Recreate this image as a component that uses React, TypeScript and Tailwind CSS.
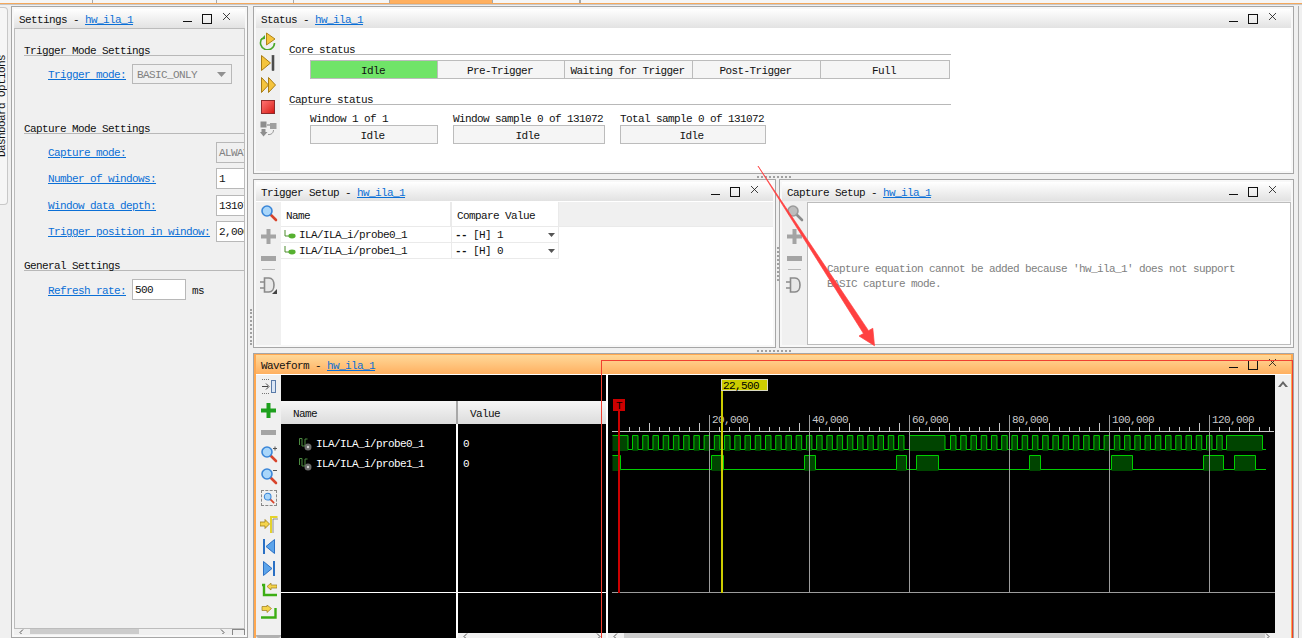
import React from 'react';

const LINK = 'text-[#0a6fd6] underline';

const WindowButtons = () => (
  <svg className="ml-auto mr-[14px] shrink-0" width="48" height="19" viewBox="0 0 48 19" fill="none" stroke="#111">
    <path d="M0 12.5H9" />
    <rect x="19.5" y="5.5" width="9" height="9" />
    <path d="M40 4L47 11M47 4L40 11" strokeWidth="0.8" />
  </svg>
);

const Panel: React.FC<{ title: string; className: string; children: React.ReactNode }> = ({ title, className, children }) => (
  <div className={`flex flex-col border border-[#a6a6a6] bg-[#f8f8f8] p-[2px] overflow-hidden ${className}`}>
    <div className="h-[19px] shrink-0 flex items-center pl-[5px] bg-linear-to-b from-white to-[#e2e2e2] whitespace-pre">
      <span className="mt-[3px]">{title} - </span>
      <span className={`mt-[3px] ${LINK}`}>hw_ila_1</span>
      <WindowButtons />
    </div>
    {children}
  </div>
);

// toolbar icons
const Glass: React.FC<{ gray?: boolean; mark?: string }> = ({ gray, mark }) => (
  <svg width="18" height="18" viewBox="0 0 18 18">
    <path d="M10 10L16 16" stroke={gray ? '#8a8a8a' : '#d8442c'} strokeWidth="2.6" strokeLinecap="round" />
    <circle cx="7" cy="7" r="5" fill={gray ? '#bdbdbd' : '#a9d6fa'} stroke={gray ? '#9a9a9a' : '#3a86d8'} strokeWidth="1.6" />
    {mark === '+' && <path d="M13 3.5H17M15 1.5V5.5" stroke="#555" />}
    {mark === '-' && <path d="M13 3.5H17" stroke="#555" />}
  </svg>
);

const Plus: React.FC<{ color: string }> = ({ color }) => (
  <svg width="15" height="15" viewBox="0 0 15 15"><path d="M5.5 0H9.5V5.5H15V9.5H9.5V15H5.5V9.5H0V5.5H5.5Z" fill={color} /></svg>
);

const Minus = () => (
  <svg width="15" height="5" viewBox="0 0 15 5"><rect width="15" height="5" fill="#a4a4a4" /></svg>
);

const Gate: React.FC<{ corner?: boolean }> = ({ corner }) => (
  <svg width="18" height="18" viewBox="0 0 18 18" fill="none">
    <path d="M0 6H4M0 12H4" stroke="#8a8a8a" strokeWidth="1.5" />
    <path d="M4.5 2H9C12 2 14 5 14 9C14 13 12 16 9 16H4.5Z" fill="#e8e8e8" stroke="#8a8a8a" strokeWidth="1.6" />
    {corner && <path d="M17 13V18H12Z" fill="#444" />}
  </svg>
);

const RunImmediate = () => (
  <svg width="18" height="18" viewBox="0 0 18 18">
    <path d="M3 6.5A7 7 0 1 0 15.5 11" fill="none" stroke="#4aa82a" strokeWidth="1.6" />
    <path d="M1 8L6 7V3Z" fill="#4aa82a" />
    <path d="M7.5 1L16 7L7.5 13Z" fill="#f5c43c" stroke="#b08418" />
  </svg>
);

const RunTrigger = () => (
  <svg width="14" height="16" viewBox="0 0 14 16">
    <path d="M0.5 0.5L9.5 8L0.5 15.5Z" fill="#f5c43c" stroke="#a87c14" />
    <rect x="11" y="0.5" width="2" height="15" fill="#555" stroke="#333" strokeWidth="0.5" />
  </svg>
);

const RunAuto = () => (
  <svg width="15" height="16" viewBox="0 0 15 16">
    <path d="M0.5 0.5L7.5 8L0.5 15.5Z" fill="#f5c43c" stroke="#a87c14" />
    <path d="M7.5 0.5L14.5 8L7.5 15.5Z" fill="#f5c43c" stroke="#a87c14" />
  </svg>
);

const StopSquare = () => <div className="w-[14px] h-[14px] bg-linear-to-br from-[#ff7070] to-[#d80c0c] border border-[#8c2a2a]" />;

const Capture = () => (
  <svg width="17" height="16" viewBox="0 0 17 16">
    <rect x="0.5" y="0.5" width="6" height="6" fill="#8e8e8e" />
    <rect x="10" y="2" width="6.5" height="6" fill="#9e9e9e" />
    <path d="M7 4H10" stroke="#777" />
    <path d="M1.5 8H5.5V11H7.5L3.5 15.5L0 11H1.5Z" fill="#8e8e8e" />
    <path d="M13.5 9C13.5 12 11 14 8 13.5" fill="none" stroke="#999" />
  </svg>
);

const WaveArrow: React.FC<{ kind: 'trig' | 'prev' | 'next' | 'swapIn' | 'swapOut' | 'fit' }> = ({ kind }) => {
  if (kind === 'fit')
    return (
      <svg width="14" height="15" viewBox="0 0 14 15" fill="none">
        <path d="M0 0.5H7M0 14.5H7" stroke="#777" strokeDasharray="1 1" />
        <path d="M0 7.5H6M4 4.5L7 7.5L4 10.5" stroke="#444" />
        <rect x="9.5" y="1.5" width="4" height="12" fill="#dbe6f5" stroke="#5a7ba8" />
      </svg>
    );
  if (kind === 'trig')
    return (
      <svg width="18" height="17" viewBox="0 0 18 17">
        <path d="M0 6H5V3.5L9.5 8L5 12.5V10H0Z" fill="#f5d44c" stroke="#9a7a18" strokeWidth="0.8" />
        <path d="M11 17V1H17.5" fill="none" stroke="#e4d22c" strokeWidth="2" />
        <path d="M13 17V3H18" fill="none" stroke="#777" strokeWidth="0.8" />
      </svg>
    );
  if (kind === 'prev')
    return (
      <svg width="12" height="15" viewBox="0 0 12 15">
        <rect x="0" y="0" width="2" height="15" fill="#2a70c4" />
        <path d="M11.5 0.5V14.5L3 7.5Z" fill="#5ca4ea" stroke="#2a70c4" />
      </svg>
    );
  if (kind === 'next')
    return (
      <svg width="12" height="15" viewBox="0 0 12 15">
        <rect x="10" y="0" width="2" height="15" fill="#2a70c4" />
        <path d="M0.5 0.5V14.5L9 7.5Z" fill="#5ca4ea" stroke="#2a70c4" />
      </svg>
    );
  if (kind === 'swapIn')
    return (
      <svg width="16" height="15" viewBox="0 0 16 15">
        <path d="M1 2H3V12H16" fill="none" stroke="#3cae14" strokeWidth="2.4" />
        <path d="M16 2H10V0L6 3.5L10 7V5H16Z" fill="#f5d44c" stroke="#9a7a18" strokeWidth="0.7" />
      </svg>
    );
  return (
    <svg width="16" height="15" viewBox="0 0 16 15">
      <path d="M0 12.5H14.5V3" fill="none" stroke="#3cae14" strokeWidth="2.4" />
      <path d="M1 1.5H6V0L10.5 3.5L6 7.5V5.5H1Z" fill="#f5d44c" stroke="#9a7a18" strokeWidth="0.7" />
    </svg>
  );
};

const ToolSlot: React.FC<{ children: React.ReactNode; className?: string }> = ({ children, className = '' }) => (
  <div className={`h-[22px] shrink-0 flex items-center justify-center ${className}`}>{children}</div>
);

const EditToolbar: React.FC<{ gray?: boolean }> = ({ gray }) => (
  <div className="w-[25px] shrink-0 bg-[#f0f0f0] flex flex-col items-stretch">
    <ToolSlot><Glass gray={gray} /></ToolSlot>
    <ToolSlot className="mt-px"><Plus color="#a4a4a4" /></ToolSlot>
    <ToolSlot><Minus /></ToolSlot>
    <div className="mx-[6px] h-px bg-[#b8b8b8]" />
    <ToolSlot className="mt-[4px]"><Gate corner={!gray} /></ToolSlot>
  </div>
);

const SectionTitle: React.FC<{ children: React.ReactNode; className?: string }> = ({ children, className = '' }) => (
  <div className={`h-[12px] leading-[15px] border-b border-[#b8b8b8] ${className}`}>{children}</div>
);

const StatusCell: React.FC<{ label: string; on?: boolean; className?: string }> = ({ label, on, className = '' }) => (
  <div className={`flex items-center justify-center pt-[3px] pr-[2px] border-r border-[#bcbcbc] last:border-r-0 ${on ? 'bg-[#70e468]' : 'bg-[#f5f5f5]'} ${className}`}>{label}</div>
);

const CaptureBox: React.FC<{ label: string; className: string }> = ({ label, className }) => (
  <div className={className}>
    <div className="h-[14px] leading-[14px] whitespace-nowrap">{label}</div>
    <div className="mt-[-1px] h-[19px] flex items-center justify-center pt-[3px] pr-[3px] bg-[#f5f5f5] border border-[#bcbcbc]">Idle</div>
  </div>
);

const SettingRow: React.FC<{ label: string; value: string; className?: string; gray?: boolean }> = ({ label, value, className = '', gray }) => (
  <div className={`flex items-center h-[21px] pl-[33px] ${className}`}>
    <span className={`${LINK} w-[168px] shrink-0 whitespace-nowrap mt-[2px]`}>{label}</span>
    <div className={`w-[60px] h-full shrink-0 flex items-center pl-[2px] pt-[2px] border border-[#b8b8b8] ${gray ? 'text-[#808080] bg-[#f0f0f0]' : 'bg-white'}`}>{value}</div>
  </div>
);

const ProbeIcon = () => (
  <svg className="mr-[3px] shrink-0" width="12" height="10" viewBox="0 0 12 10" fill="none">
    <path d="M1 0V6H5" stroke="#4c8c2c" />
    <ellipse cx="8" cy="6" rx="3.6" ry="2.4" fill="#56b030" />
  </svg>
);

const ProbeRow: React.FC<{ name: string; value: string }> = ({ name, value }) => (
  <div className="flex h-[16px] w-[278px] border-b border-[#eaeaea] bg-white">
    <div className="w-[171px] flex items-center pl-[3px] border-r border-[#eaeaea]">
      <ProbeIcon />
      <span className="mt-[2px]">{name}</span>
    </div>
    <div className="flex-1 flex items-center pl-[3px] pr-[3px] whitespace-pre border-r border-[#eaeaea]">
      <span className="mt-[2px]"><b>--</b> [H] {value}</span>
      <svg className="ml-auto" width="7" height="4" viewBox="0 0 7 4"><path d="M0 0H7L3.5 4Z" fill="#555" /></svg>
    </div>
  </div>
);

const WaveProbeIcon = () => (
  <svg className="shrink-0" width="13" height="13" viewBox="0 0 13 13" fill="none">
    <path d="M0.5 7V0.5H3V8H6V1H8.5" stroke="#4c8a40" />
    <circle cx="9" cy="9" r="3.5" fill="#6a6a6a" />
    <circle cx="9" cy="9" r="1.2" fill="#d0d0d0" />
  </svg>
);

const WaveRow: React.FC<{ name: string }> = ({ name }) => (
  <div className="h-[20px] flex items-center pl-[18px] text-white gap-[4px]">
    <WaveProbeIcon />
    <span>{name}</span>
  </div>
);

// build the waveform trace and its shading from the high intervals
type Edge = [number, number];

const traceOf = (edges: Edge[], top: number, low: number, end: number) => {
  let d = `M${edges[0][0]} ${top}`;
  edges.forEach(([a, b], i) => {
    if (i > 0) d += `H${a}V${top}`;
    d += `H${b}V${low}`;
  });
  return `${d}H${end}`;
};

const probe0: Edge[] = [[612.5, 628]];
for (let i = 0; i < 27; i++) {
  const x = 632.5 + 10.23 * i;
  probe0.push([x, x + 5.5]);
}
probe0.push([909.5, 945]);
for (let i = 0; i < 27; i++) {
  const x = 950.5 + 10.24 * i;
  probe0.push([x, x + 5.5]);
}
probe0.push([1226.5, 1262.5]);

const probe1: Edge[] = [
  [612.5, 620.5], [711.5, 723.5], [804.5, 815.5], [896.5, 906.5], [916.5, 938.5],
  [1029.5, 1040.5], [1111.5, 1132.5], [1203.5, 1223.5], [1234.5, 1255.5],
];

const majors = [709.5, 809.5, 909.5, 1009.5, 1109.5, 1209.5];
const labels = ['20,000', '40,000', '60,000', '80,000', '100,000', '120,000'];
const ticks = Array.from({ length: 65 }, (_, i) => 629.5 + i * 10);

const WavePlot = () => (
  <svg className="block flex-1 min-h-0" width="667" height="258" viewBox="608 375 667 258" fill="none">
    {probe0.map(([a, b], i) => <rect key={i} x={a} y={435} width={b - a} height={16} fill="#004400" />)}
    {probe1.map(([a, b], i) => <rect key={i} x={a} y={455} width={b - a} height={16} fill="#004400" />)}
    <path d={traceOf(probe0, 435.5, 449.5, 1266)} stroke="#00cc00" />
    <path d={traceOf(probe1, 455.5, 469.5, 1266)} stroke="#00cc00" />
    <path d="M612 431.5H1274" stroke="#c8c8c8" />
    {ticks.map((x, i) => (
      <path key={i} d={`M${x} ${(i + 3) % 5 === 0 ? 423 : 427}V431`} stroke="#c8c8c8" />
    ))}
    {majors.map((x, i) => (
      <g key={x}>
        <path d={`M${x} 415V592`} stroke="#9c9c9c" />
        <text x={x + 2.5} y={423} fill="#c8c8c8">{labels[i]}</text>
      </g>
    ))}
    <path d="M612 592.5H1275" stroke="#9c9c9c" />
    <rect x="618" y="408" width="2" height="185" fill="#cc0000" />
    <rect x="613" y="399" width="12" height="12" fill="#cc0000" />
    <text x="616" y="409" fill="#000">T</text>
    <rect x="721" y="389" width="2" height="204" fill="#cccc00" />
    <rect x="721.5" y="379.5" width="46" height="11" fill="#cccc00" stroke="#d8d8c0" />
    <text x="723" y="389" fill="#000">22,500</text>
  </svg>
);

const HScroll: React.FC<{ thumb: string; className?: string }> = ({ thumb, className = '' }) => (
  <div className={`h-[5px] shrink-0 flex items-start bg-[#f0f0f0] overflow-hidden ${className}`}>
    <svg className="ml-[5px] shrink-0" width="5" height="5" viewBox="0 0 5 5" fill="none"><path d="M4 0.5L1 3.5L4 6.5" stroke="#555" /></svg>
    <div className={`ml-[6px] h-full bg-[#cccccc] ${thumb}`} />
    <svg className="ml-auto mr-[5px] shrink-0" width="5" height="5" viewBox="0 0 5 5" fill="none"><path d="M1 0.5L4 3.5L1 6.5" stroke="#555" /></svg>
  </div>
);

const Dots: React.FC<{ vertical?: boolean; size: string }> = ({ vertical, size }) => (
  <div className={`${vertical ? 'border-l-2' : 'border-t-2'} border-dotted border-[#a0a0a0] ${size}`} />
);

const tabs = [
  'w-[93px] bg-[#f6f6f6] border-r border-[#a8a8a8]',
  'w-[124px] bg-[#f6f6f6] border-r border-[#a8a8a8]',
  'w-[77px] bg-[#f6f6f6] border-r border-[#a8a8a8]',
  'w-[96px] bg-[#f6f6f6] border-r border-[#a8a8a8]',
  'w-[102px] bg-[#ffb060]',
  'w-[88px] bg-[#f6f6f6] border-l border-r border-[#a8a8a8]',
  'flex-1 bg-[#f6f6f6] border-l border-[#a8a8a8]',
];

export default function App() {
  return (
    <div className="relative w-[1302px] h-[638px] overflow-hidden flex flex-col bg-[#f0f0f0] text-[#111] font-['Liberation_Mono',monospace] text-[11px] tracking-[-0.6px]">
      {/* top tabs */}
      <div className="h-[3px] shrink-0 flex">
        {tabs.map((t, i) => <div key={i} className={t} />)}
      </div>
      <div className="h-[2px] shrink-0 bg-[#f4a85c] border-b border-[#c8c8c8]" />

      <div className="flex-1 min-h-0 flex pt-[1px]">
        {/* Dashboard Options side tab */}
        <div className="w-[11px] shrink-0 pt-[1px]">
          <div className="w-[8px] h-[198px] bg-[#f6f6f6] border border-l-0 border-[#c8c8c8] rounded-r-[4px] overflow-hidden flex items-center justify-end">
            <div className="shrink-0 [writing-mode:vertical-rl] rotate-180 whitespace-nowrap mr-[-3px]">Dashboard Options</div>
          </div>
        </div>

        {/* Settings */}
        <Panel title="Settings" className="w-[237px] shrink-0">
          <div className="flex-1 min-h-0 border border-[#bcbcbc] bg-[#f0f0f0] overflow-hidden pt-[15px]">
            <SectionTitle className="ml-[9px]">Trigger Mode Settings</SectionTitle>
            <div className="flex items-center h-[20px] mt-[8px] pl-[33px]">
              <span className={`${LINK} w-[84px] shrink-0 mt-[2px]`}>Trigger mode:</span>
              <div className="w-[100px] h-full flex items-center pl-[4px] pr-[5px] border border-[#b8b8b8] text-[#808080] bg-[#f0f0f0]">
                <span className="mt-[2px]">BASIC_ONLY</span>
                <svg className="ml-auto" width="9" height="5" viewBox="0 0 9 5"><path d="M0 0H9L4.5 5Z" fill="#909090" /></svg>
              </div>
            </div>
            <SectionTitle className="ml-[9px] mt-[38px]">Capture Mode Settings</SectionTitle>
            <SettingRow className="mt-[8px]" label="Capture mode:" value="ALWAYS" gray />
            <SettingRow className="mt-[5px]" label="Number of windows:" value="1" />
            <SettingRow className="mt-[6px]" label="Window data depth:" value="131072" />
            <SettingRow className="mt-[5px]" label="Trigger position in window:" value="2,000" />
            <SectionTitle className="ml-[9px] mt-[17px]">General Settings</SectionTitle>
            <div className="flex items-center h-[21px] mt-[8px] pl-[33px]">
              <span className={`${LINK} w-[84px] shrink-0 mt-[3px]`}>Refresh rate:</span>
              <div className="w-[54px] h-full flex items-center pl-[2px] pt-[2px] border border-[#b8b8b8] bg-white">500</div>
              <span className="ml-[6px] mt-[3px]">ms</span>
            </div>
          </div>
          <div className="h-[6px] shrink-0 flex items-start bg-[#f0f0f0]">
            <HScroll className="flex-1" thumb="w-[109px]" />
            <div className="w-[13px] h-[6px] ml-[2px] border border-b-0 border-[#888]" />
          </div>
        </Panel>

        <div className="w-[5px] shrink-0 flex items-center justify-center pt-[10px]">
          <Dots vertical size="h-[36px]" />
        </div>

        <div className="w-[1041px] shrink-0 flex flex-col">
          {/* Status */}
          <Panel title="Status" className="h-[168px] shrink-0">
            <div className="flex-1 min-h-0 flex bg-white">
              <div className="w-[24px] shrink-0 bg-[#f0f0f0] pt-[2px] flex flex-col">
                <ToolSlot><RunImmediate /></ToolSlot>
                <ToolSlot><RunTrigger /></ToolSlot>
                <ToolSlot><RunAuto /></ToolSlot>
                <ToolSlot className="h-[21px]"><StopSquare /></ToolSlot>
                <ToolSlot><Capture /></ToolSlot>
              </div>
              <div className="w-[662px] ml-[9px] pt-[15px]">
                <SectionTitle>Core status</SectionTitle>
                <div className="ml-[21px] w-[640px] mt-[5px] h-[19px] flex border border-[#bcbcbc]">
                  <StatusCell label="Idle" on className="w-[127px]" />
                  <StatusCell label="Pre-Trigger" className="w-[127px]" />
                  <StatusCell label="Waiting for Trigger" className="w-[128px]" />
                  <StatusCell label="Post-Trigger" className="w-[128px]" />
                  <StatusCell label="Full" className="flex-1" />
                </div>
                <SectionTitle className="mt-[14px]">Capture status</SectionTitle>
                <div className="ml-[21px] mt-[7px] flex">
                  <CaptureBox label="Window 1 of 1" className="w-[128px]" />
                  <CaptureBox label="Window sample 0 of 131072" className="w-[152px] ml-[15px]" />
                  <CaptureBox label="Total sample 0 of 131072" className="w-[146px] ml-[15px]" />
                </div>
              </div>
            </div>
          </Panel>

          <div className="h-[5px] shrink-0 flex items-center justify-center"><Dots size="w-[34px]" /></div>

          <div className="h-[169px] shrink-0 flex">
            {/* Trigger Setup */}
            <Panel title="Trigger Setup" className="w-[523px] shrink-0">
              <div className="flex-1 min-h-0 flex bg-white pt-px">
                <EditToolbar />
                <div className="flex-1 min-w-0">
                  <div className="h-[25px] flex bg-[#f0f0f0] border-b border-[#eaeaea]">
                    <div className="w-[171px] bg-white border-r-2 border-[#eaeaea] flex items-center pl-[5px] pt-[5px]">Name</div>
                    <div className="w-[107px] bg-white border-r border-[#eaeaea] flex items-center pl-[5px] pt-[5px]">Compare Value</div>
                  </div>
                  <ProbeRow name="ILA/ILA_i/probe0_1" value="1" />
                  <ProbeRow name="ILA/ILA_i/probe1_1" value="0" />
                </div>
              </div>
            </Panel>

            <div className="w-[3px] shrink-0 flex items-center justify-center"><Dots vertical size="h-[34px]" /></div>

            {/* Capture Setup */}
            <Panel title="Capture Setup" className="flex-1 min-w-0">
              <div className="flex-1 min-h-0 flex bg-[#f0f0f0] pt-px">
                <EditToolbar gray />
                <div className="flex-1 min-w-0 flex flex-col justify-center border border-[#bcbcbc] bg-white pl-[19px] pt-[6px] text-[#808080] leading-[15px] whitespace-nowrap">
                  <div>Capture equation cannot be added because 'hw_ila_1' does not support</div>
                  <div>BASIC capture mode.</div>
                </div>
              </div>
            </Panel>
          </div>

          <div className="h-[5px] shrink-0 flex items-center justify-center"><Dots size="w-[34px]" /></div>

          {/* Waveform */}
          <div className="flex-1 min-h-0 flex flex-col border border-b-0 border-[#a6a6a6] bg-[#ffa850] px-[2px] pt-px overflow-hidden">
            <div className="h-[19px] shrink-0 flex items-center pl-[5px] bg-linear-to-b from-[#ffd898] to-[#ffb060] whitespace-pre">
              <span className="mt-[3px]">Waveform - </span>
              <span className={`mt-[3px] ${LINK}`}>hw_ila_1</span>
              <WindowButtons />
            </div>
            <div className="flex-1 min-h-0 flex border-t border-white">
              <div className="w-[25px] shrink-0 bg-[#f0f0f0] flex flex-col">
                <ToolSlot><WaveArrow kind="fit" /></ToolSlot>
                <ToolSlot className="mt-[2px]"><Plus color="#1ea01e" /></ToolSlot>
                <ToolSlot><Minus /></ToolSlot>
                <ToolSlot><Glass mark="+" /></ToolSlot>
                <ToolSlot><Glass mark="-" /></ToolSlot>
                <ToolSlot>
                  <div className="border border-dashed border-[#888] p-px leading-[0] w-[16px] h-[16px] overflow-hidden flex items-center justify-center"><Glass /></div>
                </ToolSlot>
                <ToolSlot className="mt-[4px]"><WaveArrow kind="trig" /></ToolSlot>
                <ToolSlot><WaveArrow kind="prev" /></ToolSlot>
                <ToolSlot><WaveArrow kind="next" /></ToolSlot>
                <ToolSlot><WaveArrow kind="swapIn" /></ToolSlot>
                <ToolSlot><WaveArrow kind="swapOut" /></ToolSlot>
                <div className="mt-auto h-[3px] bg-[#b0b0b0] rounded-b-[3px]" />
              </div>

              {/* names */}
              <div className="w-[175px] shrink-0 bg-black flex flex-col">
                <div className="h-[26px] shrink-0" />
                <div className="h-[23px] shrink-0 flex items-center pl-[12px] pt-[4px] bg-linear-to-b from-[#f6f6f6] to-[#dcdcdc]">Name</div>
                <div className="flex-1 pt-[10px]">
                  <WaveRow name="ILA/ILA_i/probe0_1" />
                  <WaveRow name="ILA/ILA_i/probe1_1" />
                </div>
                <div className="h-[46px] shrink-0 border-t border-white" />
              </div>
              <div className="w-[2px] shrink-0 bg-black flex flex-col">
                <div className="h-[26px] shrink-0" />
                <div className="h-[23px] shrink-0 bg-[#a8a8a8]" />
                <div className="flex-1 bg-white" />
              </div>

              {/* values */}
              <div className="w-[148px] shrink-0 bg-black flex flex-col">
                <div className="h-[26px] shrink-0" />
                <div className="h-[23px] shrink-0 flex items-center pl-[12px] pt-[4px] bg-linear-to-b from-[#f6f6f6] to-[#dcdcdc]">Value</div>
                <div className="flex-1 pt-[10px] text-white pl-[5px]">
                  <div className="h-[20px] flex items-center">0</div>
                  <div className="h-[20px] flex items-center">0</div>
                </div>
                <div className="h-[41px] shrink-0 border-t border-white" />
                <HScroll thumb="w-0" />
              </div>
              <div className="w-[2px] shrink-0 bg-white" />

              {/* wave */}
              <div className="w-[667px] shrink-0 bg-black flex flex-col">
                <WavePlot />
                <HScroll thumb="w-[645px]" />
              </div>

              <div className="flex-1 bg-[#f0f0f0] flex justify-center pt-[6px]">
                <svg width="10" height="6" viewBox="0 0 10 6"><path d="M0 6L5 0L10 6H7.5L5 3L2.5 6Z" fill="#666" /></svg>
              </div>
            </div>
          </div>
        </div>

        <div className="flex-1 flex justify-center">
          <div className="w-px h-full bg-[#b0b0b0]" />
        </div>
      </div>

      {/* annotations drawn over the screenshot */}
      <div className="absolute left-[601px] top-[360px] w-[692px] h-[290px] border border-[#f04030] pointer-events-none" />
      <svg className="absolute left-0 top-0 pointer-events-none" width="1302" height="638" viewBox="0 0 1302 638">
        <polygon points="758,166 868.5,330.7 872.8,328.3 874.5,345.7 859,336 863.5,333.5" fill="#ff4040" stroke="#ff4040" strokeWidth="0.7" />
      </svg>
    </div>
  );
}
